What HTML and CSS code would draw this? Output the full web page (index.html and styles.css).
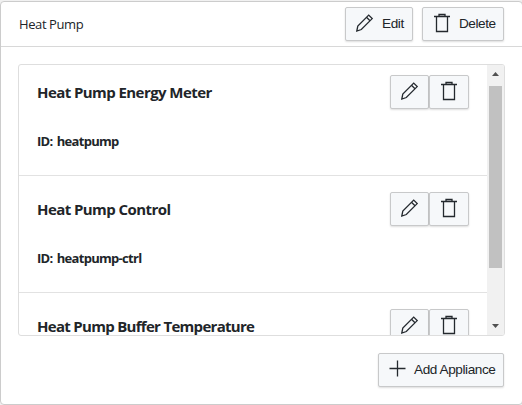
FILE: index.html
```
<!DOCTYPE html>
<html lang="en">
<head>
<meta charset="utf-8">
<title>Heat Pump</title>
<link rel="stylesheet" href="styles.css">
</head>
<body>
<svg width="0" height="0" class="symbols">
  <symbol id="pencil" viewBox="0 0 20 20"><path d="M2.8 18 3.8 13 14.7 2.1 18.2 5.6 7.3 16.5ZM12.5 4.3 16 7.8"/></symbol>
  <symbol id="trash" viewBox="0 0 20 20"><path d="M2 3.5H18M4.5 3.5V18.5H15.5V3.5M7 3.5V1.5H13V3.5"/></symbol>
  <symbol id="plus" viewBox="0 0 20 20"><path d="M9.5 1.5V17.5M1.5 9.5H17.5"/></symbol>
</svg>
<main class="card">
  <header class="header">
    <h1 class="heading">Heat Pump</h1>
    <button class="button edit"><svg class="icon"><use href="#pencil"/></svg><span class="edit-label">Edit</span></button>
    <button class="button delete"><svg class="icon"><use href="#trash"/></svg><span class="delete-label">Delete</span></button>
  </header>
  <section class="panel">
    <div class="list">
      <article class="item">
        <div class="row"><h2 class="title t1">Heat Pump Energy Meter</h2><div class="actions"><button class="button small"><svg class="icon"><use href="#pencil"/></svg></button><button class="button small"><svg class="icon"><use href="#trash"/></svg></button></div></div>
        <p class="id">ID: heatpump</p>
      </article>
      <article class="item">
        <div class="row"><h2 class="title t2">Heat Pump Control</h2><div class="actions"><button class="button small"><svg class="icon"><use href="#pencil"/></svg></button><button class="button small"><svg class="icon"><use href="#trash"/></svg></button></div></div>
        <p class="id">ID: heatpump-ctrl</p>
      </article>
      <article class="item">
        <div class="row"><h2 class="title t3">Heat Pump Buffer Temperature</h2><div class="actions"><button class="button small"><svg class="icon"><use href="#pencil"/></svg></button><button class="button small"><svg class="icon"><use href="#trash"/></svg></button></div></div>
      </article>
    </div>
    <div class="scrollbar"><i class="arrow up"></i><i class="thumb"></i><i class="arrow down"></i></div>
  </section>
  <footer class="footer"><button class="button add"><svg class="icon"><use href="#plus"/></svg><span class="add-label">Add Appliance</span></button></footer>
</main>
</body>
</html>
```
FILE: styles.css
```
* { box-sizing: border-box; }
body { margin: 0; padding-top: 1px; height: 405px; overflow: hidden; background: #f1f1f1; color: #212529; font-family: "Open Sans", "Noto Sans", sans-serif; }
h1, h2, p { margin: 0; }
.symbols { display: block; }
.card { width: 523px; height: 404px; border: 1px solid #ccc; border-radius: 4px; background: #fff; }
.header { display: flex; align-items: flex-start; height: 45px; padding: 5px 18px 0 18px; border-bottom: 1px solid #d8d8d8; }
.heading { flex: 1; font-size: 13px; font-weight: 400; line-height: 35px; letter-spacing: -.4px; }
.button { display: flex; align-items: center; height: 34px; margin: 0; padding: 0 0 2px 8px; border: 1px solid #c8c9ca; border-radius: 2px; background: #f6f8fa; box-shadow: 0 1px 2px #0002; color: #212529; font: 13.6px/18px "Liberation Sans", sans-serif; white-space: nowrap; }
.icon { flex: none; width: 20px; height: 20px; fill: none; stroke: #24292e; stroke-width: 1.3; }
.edit { width: 68px; margin-right: 9px; }
.delete { width: 82px; padding-left: 9px; }
.edit-label, .delete-label, .add-label { margin: 1px 0 0 8px; }
.edit-label { letter-spacing: -.4px; }
.delete-label { margin-left: 7px; letter-spacing: -.45px; }
.panel { display: flex; width: 487px; height: 272px; margin: 17px 0 0 17px; border: 1px solid #dedede; border-radius: 3px; overflow: hidden; }
.list { flex: 1; overflow: hidden; }
.item { height: 117px; padding: 16px 18px 0; border-bottom: 1px solid #e2e2e2; }
.item:first-child { height: 111px; padding-top: 10px; }
.row { display: flex; justify-content: space-between; height: 34px; }
.title { font-size: 15px; font-weight: 700; line-height: 35px; white-space: nowrap; }
.t1, .t2 { letter-spacing: -.57px; }
.t3 { letter-spacing: -.7px; }
.actions { display: flex; }
.small { width: 39px; }
.small + .small { width: 40px; padding-left: 9px; }
.id { margin-top: 23px; font-size: 13px; font-weight: 700; line-height: 18px; letter-spacing: -.7px; word-spacing: 1.5px; }
.scrollbar { display: flex; flex-direction: column; width: 17px; padding: 7px 2px 7px; background: #f1f1f1; }
.arrow { align-self: center; width: 7px; height: 4px; background: #505050; }
.up { clip-path: polygon(50% 0, 100% 100%, 0 100%); }
.down { margin-top: auto; clip-path: polygon(0 0, 100% 0, 50% 100%); }
.thumb { height: 182px; margin-top: 10px; background: #c1c1c1; }
.footer { display: flex; justify-content: flex-end; padding: 17px 18px 0 0; }
.add { width: 126px; padding-left: 9px; }
.add-label { margin-left: 6px; letter-spacing: -.42px; }
```
